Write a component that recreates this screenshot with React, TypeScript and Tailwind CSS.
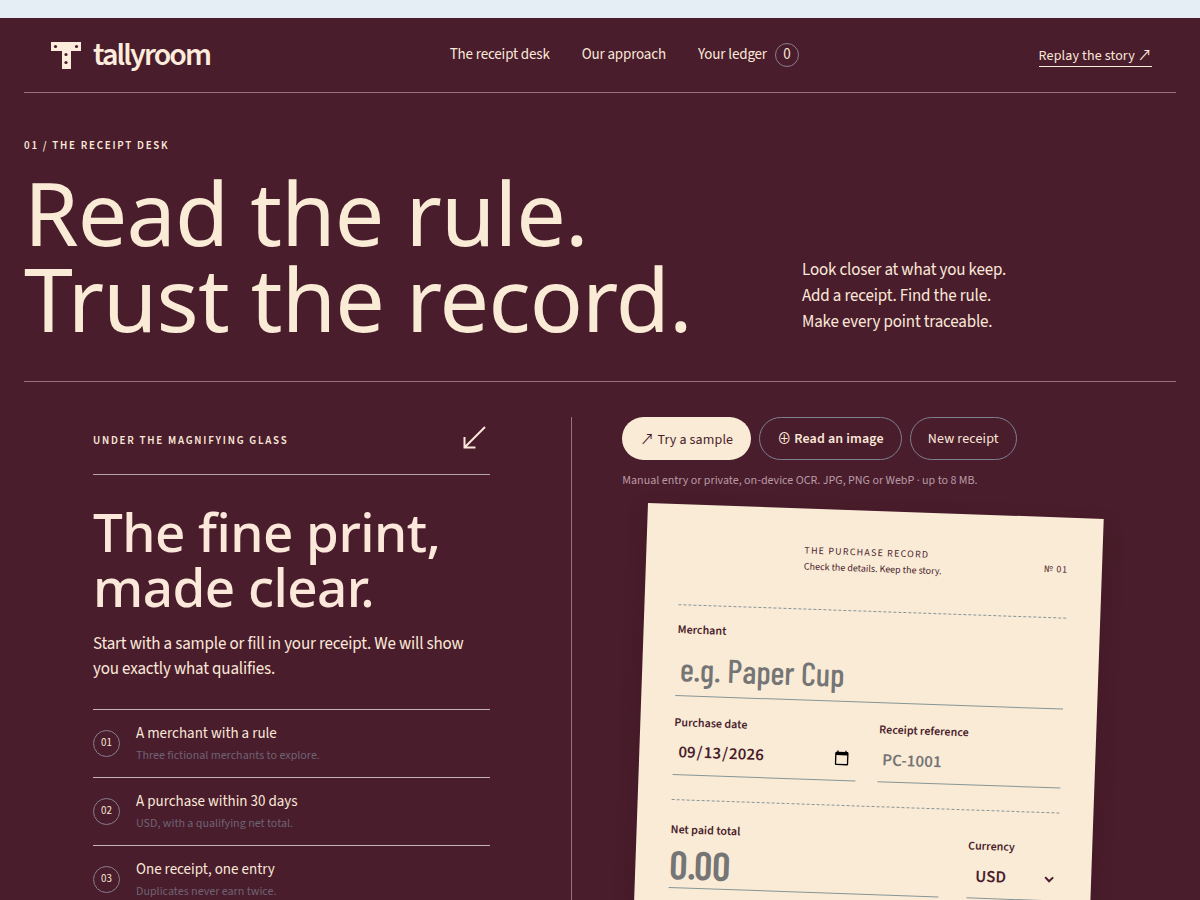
import { useState } from 'react';

const CHECKS = [
  { id: '01', title: 'A merchant with a rule', note: 'Three fictional merchants to explore.' },
  { id: '02', title: 'A purchase within 30 days', note: 'USD, with a qualifying net total.' },
  { id: '03', title: 'One receipt, one entry', note: 'Duplicates never earn twice.' },
];

const LABEL = 'block text-[12px] leading-4 font-semibold';
const FIELD = 'block w-full border-b border-[#869595] bg-transparent outline-none placeholder:text-[#757575]';
const CONDENSED = "font-['Barlow_Condensed','Roboto',sans-serif]";

function Arrow() {
  return <span className="font-['Noto_Sans_CJK_SC',sans-serif]">↗</span>;
}

function Logo() {
  return (
    <a href="#top" className="flex items-center gap-3 text-[#fdebdc]">
      <svg viewBox="0 0 30 27" className="h-[27px] w-[30px]" aria-hidden="true">
        <path d="M0 0h30v9H20v18h-9V9H0z" fill="currentColor" />
        <g fill="#491d2b">
          <circle cx="4.5" cy="4.5" r="1.6" />
          <circle cx="25.5" cy="4.5" r="1.6" />
          <circle cx="15" cy="12.5" r="1.6" />
          <circle cx="15" cy="20.5" r="1.6" />
        </g>
      </svg>
      <span className="text-[32px] leading-9 font-semibold tracking-[-0.06em]">tallyroom</span>
    </a>
  );
}

function Header() {
  return (
    <header className="flex h-[75px] items-center justify-between border-b border-[#98727f] pr-6 pl-[27px]">
      <Logo />
      <nav className="flex items-center gap-8 text-[15px] leading-5 tracking-[-0.01em]">
        <a href="#desk">The receipt desk</a>
        <a href="#approach">Our approach</a>
        <a href="#ledger" className="flex items-center gap-2">
          Your ledger
          <span className="flex size-6 items-center justify-center rounded-full border border-[#8a7d90]">0</span>
        </a>
      </nav>
      <a href="#story" className="border-b border-[#fdebdc] text-[14px] leading-5 tracking-[0.01em]">
        Replay the story <Arrow />
      </a>
    </header>
  );
}

function FinePrint() {
  return (
    <section className="border-r border-[#98727f] pr-[81px] pl-[69px]">
      <div className="flex h-[58px] items-start justify-between border-b border-[#b3a3ab]">
        <p className="pt-4 text-[11px] leading-4 font-semibold tracking-[0.16em]">UNDER THE MAGNIFYING GLASS</p>
        <svg viewBox="0 0 24 24" className="mt-2 mr-1 size-6" fill="none" stroke="currentColor" strokeWidth="2" aria-hidden="true">
          <path d="M23 2 3 22M2.5 12v10.5h11" />
        </svg>
      </div>
      <h2 className="mt-[29px] font-['Noto_Sans',sans-serif] text-[53px] leading-[55px] font-medium tracking-[-0.01em]">
        The fine print,
        <br />
        made clear.
      </h2>
      <p className="mt-[18px] text-[17px] leading-[25px] tracking-[-0.01em]">
        Start with a sample or fill in your receipt. We will show you exactly what qualifies.
      </p>
      <ol className="mt-[27px]">
        {CHECKS.map((check) => (
          <li key={check.id} className="flex h-[68px] items-center gap-4 border-t border-[#c3b3b8]">
            <span className="flex size-[27px] shrink-0 items-center justify-center rounded-full border border-[#8a7d90] text-[11px]">
              {check.id}
            </span>
            <div>
              <h3 className="text-[15px] leading-5">{check.title}</h3>
              <p className="mt-1 text-[12px] leading-4 text-[#6f6374]">{check.note}</p>
            </div>
          </li>
        ))}
      </ol>
    </section>
  );
}

function ReceiptForm() {
  const [date, setDate] = useState('2026-09-13');

  return (
    <form className="mt-[14px] ml-[26px] h-[600px] max-w-[456px] origin-top-left rotate-2 bg-[#faebd7] px-[34px] text-[#491d2b] shadow-[0_8px_20px_rgba(50,15,28,0.25)]">
      <div className="grid h-[101px] grid-cols-[124px_1fr_auto] items-center border-b border-dashed border-[#869595] text-[10px]">
        <div className="col-start-2 whitespace-nowrap">
          <p className="leading-4 tracking-[0.12em]">THE PURCHASE RECORD</p>
          <p className="leading-4">Check the details. Keep the story.</p>
        </div>
        <p className="pt-1 tracking-[0.08em]">№ 01</p>
      </div>

      <div className="pt-[17px]">
        <label htmlFor="merchant" className={LABEL}>Merchant</label>
        <input
          id="merchant"
          placeholder="e.g. Paper Cup"
          className={`${FIELD} ${CONDENSED} mt-[7px] h-[51px] px-1 pb-1 text-[33px] font-medium`}
        />
      </div>

      <div className="grid grid-cols-2 gap-[22px] border-b border-dashed border-[#869595] pt-[19px] pb-6">
        <div>
          <label htmlFor="date" className={LABEL}>Purchase date</label>
          <input
            id="date"
            type="date"
            value={date}
            onChange={(e) => setDate(e.target.value)}
            className={`${FIELD} h-11 px-1 text-[17px] font-semibold`}
          />
        </div>
        <div>
          <label htmlFor="reference" className={LABEL}>Receipt reference</label>
          <input id="reference" placeholder="PC-1001" className={`${FIELD} h-11 px-1 text-[17px] font-semibold`} />
        </div>
      </div>

      <div className="grid grid-cols-[1fr_90px] items-end gap-7 pt-[22px]">
        <div>
          <label htmlFor="total" className={LABEL}>Net paid total</label>
          <input
            id="total"
            inputMode="decimal"
            placeholder="0.00"
            className={`${FIELD} ${CONDENSED} h-[50px] text-[40px] font-semibold`}
          />
        </div>
        <div>
          <label htmlFor="currency" className={LABEL}>Currency</label>
          <select id="currency" className={`${FIELD} h-11 px-1 text-[17px] font-semibold`}>
            <option>USD</option>
          </select>
        </div>
      </div>
    </form>
  );
}

export default function App() {
  return (
    <div className="min-h-screen overflow-hidden bg-[#491d2b] font-['Source_Sans_3','Source_Sans_Pro','Noto_Sans_CJK_SC',sans-serif] text-[#fbe8da]">
      <div className="h-[18px] bg-[#e6eef5]" />
      <div id="top" className="px-6">
        <Header />

        <section className="flex items-end border-b border-[#98727f] pt-[45px] pb-10">
          <div className="w-[778px]">
            <p className="text-[11px] leading-4 font-semibold tracking-[0.16em]">01 / THE RECEIPT DESK</p>
            <h1 className="mt-[15px] font-['Noto_Sans',sans-serif] text-[88px] leading-[86px] tracking-[-0.01em] text-[#faebd7]">
              Read the rule.
              <br />
              Trust the record.
            </h1>
          </div>
          <p className="pb-1.5 text-[17px] leading-[26px] tracking-[-0.01em]">
            Look closer at what you keep.
            <br />
            Add a receipt. Find the rule.
            <br />
            Make every point traceable.
          </p>
        </section>

        <main id="desk" className="grid grid-cols-[476fr_524fr] pt-[35px]">
          <FinePrint />
          <section className="pl-[50px]">
            <div className="flex gap-2 text-[14px] leading-5 tracking-[0.01em]">
              <button className="h-[43px] rounded-full bg-[#faebd7] px-[18px] text-[#491d2b]">
                <Arrow /> Try a sample
              </button>
              <button className="h-[43px] rounded-full border border-[#7d8090] px-[17px] font-semibold">
                <span className="font-normal">⊕</span> Read an image
              </button>
              <button className="h-[43px] rounded-full border border-[#7d8090] px-[17px]">New receipt</button>
            </div>
            <p className="mt-[13px] text-[12px] leading-4 text-[#b99aa6]">
              Manual entry or private, on-device OCR. JPG, PNG or WebP · up to 8 MB.
            </p>
            <ReceiptForm />
          </section>
        </main>
      </div>
    </div>
  );
}
